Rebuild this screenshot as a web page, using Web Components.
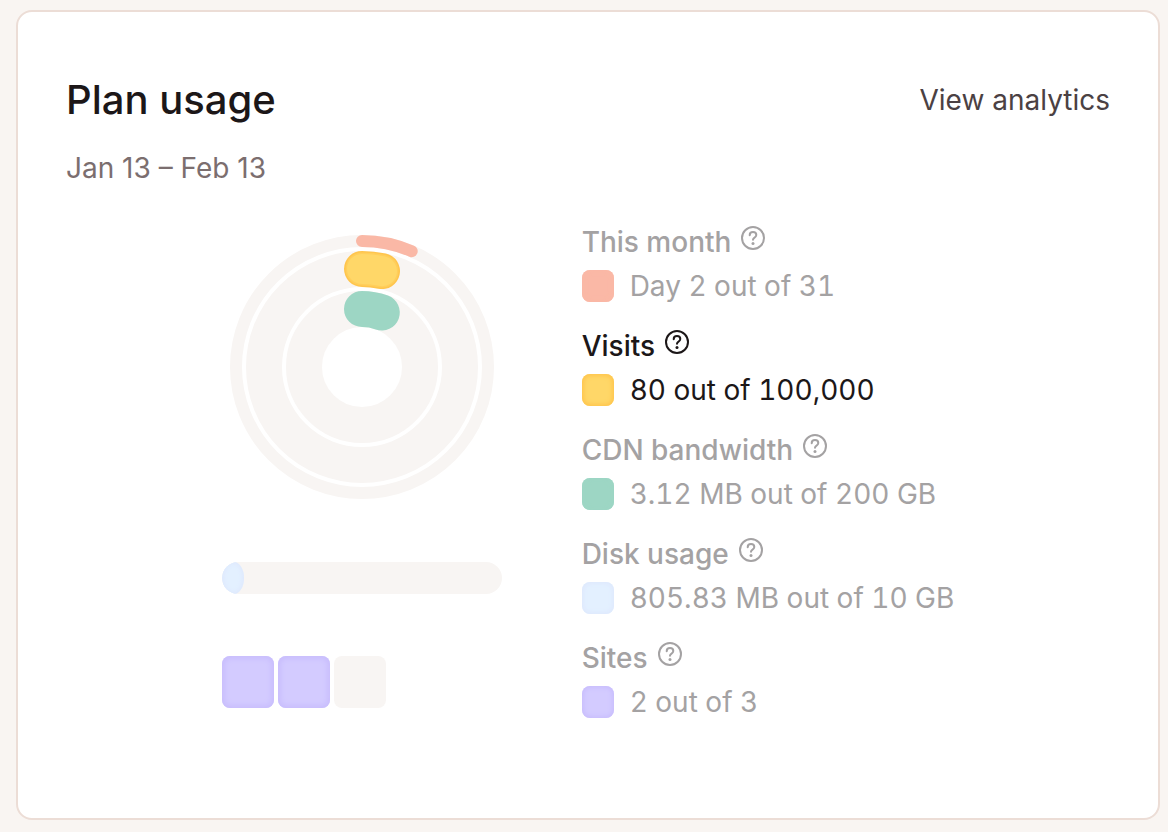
<!DOCTYPE html>
<html lang="en">
<head>
<meta charset="utf-8">
<meta name="viewport" content="width=device-width, initial-scale=1">
<title>Plan usage</title>
<style>
  :root {
    --ink: #1c1718;
    --ink-soft: #4b4143;
    --ink-muted: #7b6e6f;
    --ink-dim: #a4a2a3;
    --page: #f9f5f2;
    --track: #f8f5f3;
    --line: #ecddd6;
    --coral: #fab8a6;
    --yellow: #ffd768;
    --yellow-edge: #ffc54d;
    --green: #9dd6c4;
    --blue: #e3f0ff;
    --blue-edge: #dfe9fd;
    --violet: #d3cbff;
    --violet-edge: #c9befd;
  }

  body {
    margin: 0;
    padding: 10px 8px 12px 16px;
    background: var(--page);
    color: var(--ink);
    font-family: Inter, "Liberation Sans", sans-serif;
    font-size: 28px;
    line-height: 40px;
  }
</style>
</head>
<body>
<usage-card heading="Plan usage" period="Jan 13 – Feb 13">
  <a slot="action" href="#analytics">View analytics</a>
  <usage-chart slot="chart"></usage-chart>
  <usage-item slot="legend" label="This month" color="coral">Day 2 out of 31</usage-item>
  <usage-item slot="legend" label="Visits" color="yellow" active>80 out of 100,000</usage-item>
  <usage-item slot="legend" label="CDN bandwidth" color="green">3.12 MB out of 200 GB</usage-item>
  <usage-item slot="legend" label="Disk usage" color="blue">805.83 MB out of 10 GB</usage-item>
  <usage-item slot="legend" label="Sites" color="violet">2 out of 3</usage-item>
</usage-card>

<script>
const cardTemplate = document.createElement('template');
cardTemplate.innerHTML = `
  <style>
    :host {
      display: block;
      padding: 64px 48px 96px;
      border: 2px solid var(--line);
      border-radius: 16px;
      background: #fff;
    }

    header {
      display: flex;
      flex-wrap: wrap;
      align-items: center;
      justify-content: space-between;
    }

    h2 {
      margin: 0;
      font-size: 40px;
      font-weight: 500;
      line-height: 48px;
    }

    ::slotted(a) {
      color: var(--ink-soft);
      text-decoration: none;
    }

    .period {
      margin: 24px 0 34px;
      color: var(--ink-muted);
    }

    .content {
      display: flex;
      flex-wrap: wrap;
      align-items: flex-start;
      justify-content: center;
      gap: 40px 80px;
    }

    .legend {
      display: flex;
      flex-direction: column;
      gap: 20px;
    }
  </style>
  <header>
    <h2></h2>
    <slot name="action"></slot>
  </header>
  <p class="period"></p>
  <div class="content">
    <slot name="chart"></slot>
    <div class="legend"><slot name="legend"></slot></div>
  </div>
`;

class UsageCard extends HTMLElement {
  constructor() {
    super();
    this.attachShadow({ mode: 'open' });
    this.shadowRoot.appendChild(cardTemplate.content.cloneNode(true));
  }

  connectedCallback() {
    this.shadowRoot.querySelector('h2').textContent = this.getAttribute('heading');
    this.shadowRoot.querySelector('.period').textContent = this.getAttribute('period');
  }
}

const itemTemplate = document.createElement('template');
itemTemplate.innerHTML = `
  <style>
    :host {
      display: block;
      color: var(--ink-dim);
    }

    :host([active]) {
      color: var(--ink);
    }

    .label {
      display: flex;
      align-items: flex-start;
      gap: 10px;
      margin-bottom: 4px;
      font-weight: 500;
    }

    button {
      padding: 4px 0 0;
      border: 0;
      background: none;
      color: inherit;
      cursor: pointer;
    }

    svg {
      display: block;
      width: 24px;
      height: 24px;
    }

    .value {
      display: flex;
      align-items: center;
      gap: 16px;
      font-variant-numeric: tabular-nums;
    }

    .swatch {
      flex: none;
      width: 32px;
      height: 32px;
      border-radius: 8px;
      background: var(--fill);
      box-shadow: inset 0 0 4px 2px var(--edge);
    }
  </style>
  <div class="label">
    <span class="name"></span>
    <button type="button">
      <svg viewBox="0 0 24 24" fill="none" stroke="currentColor" stroke-width="2" stroke-linecap="round" stroke-linejoin="round" aria-hidden="true">
        <circle cx="12" cy="12" r="11"/>
        <path d="M8.7 9.2C8.7 7.3 10.1 6 12 6s3.3 1.2 3.3 2.9c0 1.4-.8 2-1.8 2.7-.9.6-1.5 1.1-1.5 2.2"/>
        <circle cx="12" cy="17.5" r="1.5" fill="currentColor" stroke="none"/>
      </svg>
    </button>
  </div>
  <div class="value"><span class="swatch"></span><span><slot></slot></span></div>
`;

class UsageItem extends HTMLElement {
  constructor() {
    super();
    this.attachShadow({ mode: 'open' });
    this.shadowRoot.appendChild(itemTemplate.content.cloneNode(true));
  }

  connectedCallback() {
    const label = this.getAttribute('label');
    const color = this.getAttribute('color');
    const swatch = this.shadowRoot.querySelector('.swatch');
    this.shadowRoot.querySelector('.name').textContent = label;
    this.shadowRoot.querySelector('button').setAttribute('aria-label', `About ${label}`);
    swatch.style.setProperty('--fill', `var(--${color})`);
    // coral and green are flat, so their edge falls back to the fill
    swatch.style.setProperty('--edge', `var(--${color}-edge, var(--${color}))`);
  }
}

const chartTemplate = document.createElement('template');
chartTemplate.innerHTML = `
  <style>
    :host {
      display: block;
      width: 280px;
      padding-top: 13px;
    }

    .rings {
      display: block;
      width: 264px;
      height: 264px;
      margin: 0 auto 63px;
      fill: none;
    }

    .track {
      stroke: var(--track);
    }

    .arc {
      stroke-linecap: round;
    }

    .bar {
      height: 32px;
      margin-bottom: 62px;
      border-radius: 16px;
      background: var(--track);
      overflow: hidden;
    }

    .bar div {
      width: 8%;
      height: 100%;
      border-radius: 12px 10px 10px 12px / 16px;
      background: var(--blue);
      box-shadow: inset 0 0 4px 2px var(--blue-edge);
    }

    .sites {
      display: flex;
      gap: 4px;
    }

    .sites span {
      width: 52px;
      height: 52px;
      border-radius: 8px;
      background: var(--track);
    }

    .sites .used {
      background: var(--violet);
      box-shadow: inset 0 0 5px 3px var(--violet-edge);
    }
  </style>
  <svg class="rings" viewBox="-132 -132 264 264" aria-hidden="true">
    <circle class="track" r="126" stroke-width="12"/>
    <circle class="track" r="98" stroke-width="36"/>
    <circle class="track" r="58" stroke-width="36"/>
    <path class="arc" d="M0 -126A126 126 0 0 1 49.7 -115.8" stroke="var(--coral)" stroke-width="12"/>
    <path class="arc" d="M0 -98A98 98 0 0 1 20 -95.9" stroke="var(--yellow-edge)" stroke-width="36"/>
    <path class="arc" d="M0 -98A98 98 0 0 1 20 -95.9" stroke="var(--yellow)" stroke-width="33" opacity=".5"/>
    <path class="arc" d="M0 -98A98 98 0 0 1 20 -95.9" stroke="var(--yellow)" stroke-width="30"/>
    <path class="arc" d="M0 -58A58 58 0 0 1 19.8 -54.5" stroke="var(--green)" stroke-width="36"/>
  </svg>
  <div class="bar"><div></div></div>
  <div class="sites"><span class="used"></span><span class="used"></span><span></span></div>
`;

class UsageChart extends HTMLElement {
  constructor() {
    super();
    this.attachShadow({ mode: 'open' });
    this.shadowRoot.appendChild(chartTemplate.content.cloneNode(true));
  }
}

customElements.define('usage-card', UsageCard);
customElements.define('usage-item', UsageItem);
customElements.define('usage-chart', UsageChart);
</script>
</body>
</html>
